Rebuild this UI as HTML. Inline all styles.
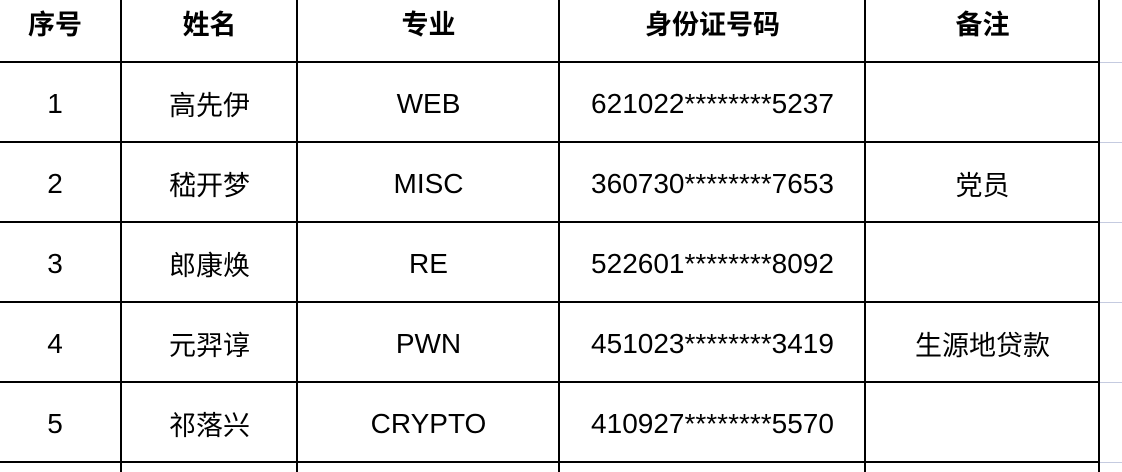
<!DOCTYPE html>
<html><head><meta charset="utf-8"><style>
body{margin:0;width:1122px;height:472px;background:#fff;position:relative;overflow:hidden;font-family:"Liberation Sans","Noto Sans CJK SC",sans-serif;color:#000}
.v{position:absolute;top:0;width:2px;height:472px;background:#000}
.h{position:absolute;left:0;width:1100px;height:2px;background:#000}
.g{position:absolute;left:1100px;width:22px;height:1px;background:#c5cbe0}
.c{position:absolute;text-align:center;font-size:28px;line-height:32px}
.hd{font-weight:bold;top:9px;font-size:27px}
.cj{font-family:"Noto Sans CJK SC",sans-serif;font-size:27px}
</style></head><body>
<div class="v" style="left:120px"></div><div class="v" style="left:296px"></div><div class="v" style="left:558px"></div><div class="v" style="left:864px"></div><div class="v" style="left:1098px"></div>
<div class="h" style="top:61px"></div><div class="h" style="top:141px"></div><div class="h" style="top:221px"></div><div class="h" style="top:301px"></div><div class="h" style="top:381px"></div><div class="h" style="top:461px"></div>
<div class="g" style="top:62px"></div><div class="g" style="top:142px"></div><div class="g" style="top:222px"></div><div class="g" style="top:302px"></div><div class="g" style="top:382px"></div><div class="g" style="top:462px"></div>
<div class="c hd" style="left:0;width:110px">序号</div>
<div class="c hd" style="left:122px;width:175px">姓名</div>
<div class="c hd" style="left:298px;width:261px">专业</div>
<div class="c hd" style="left:560px;width:305px">身份证号码</div>
<div class="c hd" style="left:866px;width:233px">备注</div>

<div class="c" style="top:88px;left:0;width:110px">1</div>
<div class="c cj" style="top:88px;left:122px;width:175px">高先伊</div>
<div class="c" style="top:88px;left:298px;width:261px">WEB</div>
<div class="c" style="top:88px;left:560px;width:305px">621022********5237</div>

<div class="c" style="top:168px;left:0;width:110px">2</div>
<div class="c cj" style="top:168px;left:122px;width:175px">嵇开梦</div>
<div class="c" style="top:168px;left:298px;width:261px">MISC</div>
<div class="c" style="top:168px;left:560px;width:305px">360730********7653</div>
<div class="c cj" style="top:168px;left:866px;width:233px">党员</div>

<div class="c" style="top:248px;left:0;width:110px">3</div>
<div class="c cj" style="top:248px;left:122px;width:175px">郎康焕</div>
<div class="c" style="top:248px;left:298px;width:261px">RE</div>
<div class="c" style="top:248px;left:560px;width:305px">522601********8092</div>

<div class="c" style="top:328px;left:0;width:110px">4</div>
<div class="c cj" style="top:328px;left:122px;width:175px">元羿谆</div>
<div class="c" style="top:328px;left:298px;width:261px">PWN</div>
<div class="c" style="top:328px;left:560px;width:305px">451023********3419</div>
<div class="c cj" style="top:328px;left:866px;width:233px">生源地贷款</div>

<div class="c" style="top:408px;left:0;width:110px">5</div>
<div class="c cj" style="top:408px;left:122px;width:175px">祁落兴</div>
<div class="c" style="top:408px;left:298px;width:261px">CRYPTO</div>
<div class="c" style="top:408px;left:560px;width:305px">410927********5570</div>
</body></html>
